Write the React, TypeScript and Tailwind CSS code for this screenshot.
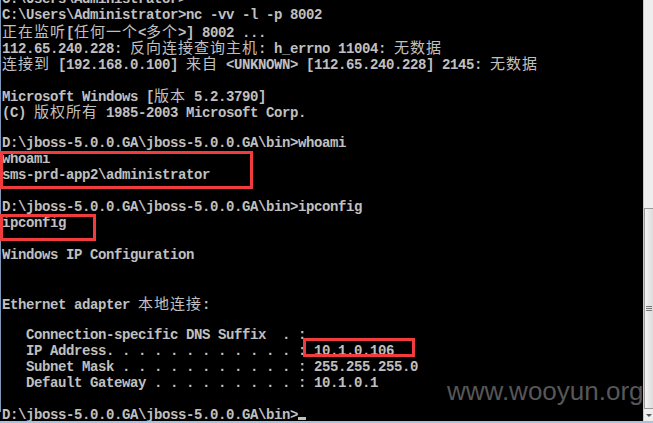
const lines: string[] = [
  'C:\\Users\\Administrator>',
  'C:\\Users\\Administrator>nc -vv -l -p 8002',
  '正在监听[任何一个<多个>] 8002 ...',
  '112.65.240.228: 反向连接查询主机: h_errno 11004: 无数据',
  '连接到 [192.168.0.100] 来自 <UNKNOWN> [112.65.240.228] 2145: 无数据',
  '',
  'Microsoft Windows [版本 5.2.3790]',
  '(C) 版权所有 1985-2003 Microsoft Corp.',
  '',
  'D:\\jboss-5.0.0.GA\\jboss-5.0.0.GA\\bin>whoami',
  'whoami',
  'sms-prd-app2\\administrator',
  '',
  'D:\\jboss-5.0.0.GA\\jboss-5.0.0.GA\\bin>ipconfig',
  'ipconfig',
  '',
  'Windows IP Configuration',
  '',
  '',
  'Ethernet adapter 本地连接:',
  '',
  '   Connection-specific DNS Suffix  . :',
  '   IP Address. . . . . . . . . . . . : 10.1.0.106',
  '   Subnet Mask . . . . . . . . . . . : 255.255.255.0',
  '   Default Gateway . . . . . . . . . : 10.1.0.1',
  '',
];

function Row({ text, cursor }: { text: string; cursor?: boolean }) {
  // ascii in the console font, CJK runs get a double-width cell
  const parts = text.split(/([^\x00-\x7f]+)/);
  return (
    <div className="h-4 whitespace-pre">
      {parts.map((p, i) =>
        i % 2 ? (
          <span key={i} className="font-['Noto_Sans_CJK_SC',sans-serif] font-normal text-[15px] tracking-[1px]">
            {p}
          </span>
        ) : (
          <span key={i}>{p}</span>
        )
      )}
      {cursor && <span className="inline-block w-2 h-[3px] bg-[#c0c0c0] align-[-1px]" />}
    </div>
  );
}

export default function App() {
  return (
    <div className="w-[653px] h-[423px] bg-black flex flex-col overflow-hidden">
      <div className="flex flex-1 min-h-0">
        {/* console */}
        <div className="relative flex-1 overflow-hidden">
          <div className="h-full border-l border-[#7f98b8] pl-px -mt-[9px] font-['Liberation_Mono',monospace] font-bold text-[14px] tracking-[-0.4px] leading-4 text-[#c0c0c0]">
            {lines.map((l, i) => (
              <Row key={i} text={l} />
            ))}
            <Row text={'D:\\jboss-5.0.0.GA\\jboss-5.0.0.GA\\bin>'} cursor />
          </div>

          {/* annotations */}
          <div className="absolute left-0 top-[151px] w-[253px] h-[38px] border-[3px] border-[#f03c3c]" />
          <div className="absolute left-0 top-[214px] w-[96px] h-[27px] border-[3px] border-[#f03c3c]" />
          <div className="absolute left-[303px] top-[338px] w-[112px] h-[19px] border-[3px] border-[#f03c3c]" />

          <div className="absolute left-[447px] top-[378px] font-['Liberation_Sans',Arial,sans-serif] text-[26px] leading-[26px] text-[#575757] whitespace-nowrap">
            www.wooyun.org
          </div>
        </div>

        {/* scrollbar */}
        <div className="w-[10px] flex flex-col bg-[#eeeeee] border-l border-[#c8c8c8]">
          <div className="flex-1" />
          <div className="h-[201px] border-l border-t border-b border-[#9a9a9a] bg-gradient-to-r from-[#f4f4f4] to-[#dcdcdc] flex flex-col items-center justify-center gap-px">
            <div className="w-[6px] h-px bg-[#777]" />
            <div className="w-[6px] h-px bg-[#777]" />
            <div className="w-[6px] h-px bg-[#777]" />
          </div>
          <div className="h-[12px] flex items-center justify-end pr-px">
            <div className="w-0 h-0 border-l-[3px] border-r-[3px] border-t-[3px] border-l-transparent border-r-transparent border-t-[#555]" />
          </div>
        </div>
      </div>
      <div className="h-[2px] bg-[#a6c2e2]" />
    </div>
  );
}
